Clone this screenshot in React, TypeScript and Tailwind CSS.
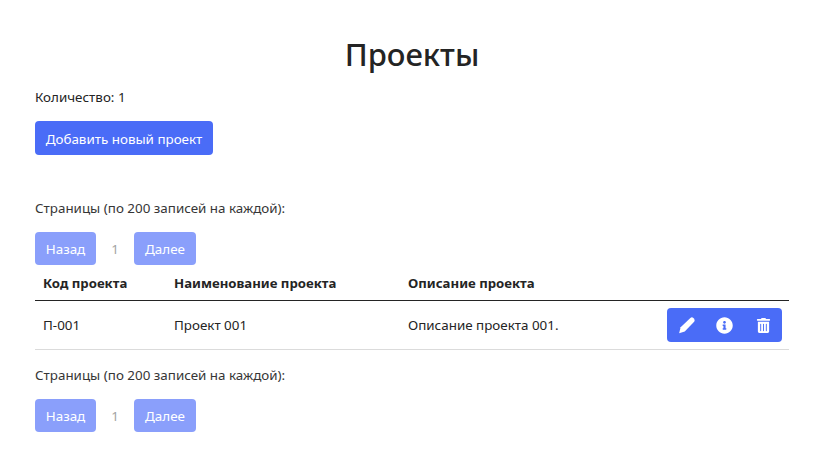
import { FaInfoCircle, FaTrashAlt } from 'react-icons/fa';

function Pager() {
  return (
    <div className="flex items-center">
      <button className="h-[33px] w-[61px] rounded bg-[#8a9ffb] pt-px text-white text-[13.4px] flex items-center justify-center">Назад</button>
      <span className="w-[38px] pt-px text-center text-[13.4px] text-[#a3a3a3]">1</span>
      <button className="h-[33px] w-[62px] rounded bg-[#8a9ffb] pt-px text-white text-[13.4px] flex items-center justify-center">Далее</button>
    </div>
  );
}

const PencilIcon = () => (
  <svg width="18" height="18" viewBox="0 0 24 24" fill="currentColor">
    <path d="M1.5 23 L3.5 15 L16.5 2.5 Q18.5 1 20.5 2.5 L21.5 3.5 Q23 5.5 21.5 7.5 L9 20.5 Z" />
  </svg>
);

export default function App() {
  return (
    <div className="w-[822px] h-[474px] bg-white pl-[35px] pr-[33px] text-[13.4px] text-[#363636] overflow-hidden" style={{ fontFamily: '"Noto Sans", sans-serif' }}>
      <h1 className="pt-[32px] h-[80px] text-center text-[31px] leading-[44px] font-medium text-[#242424]">Проекты</h1>
      <p className="mt-[8px] leading-[19px] text-[#242424]">Количество: 1</p>
      <button className="mt-[14px] h-[34px] w-[178px] rounded bg-[#4a6cf7] pt-[2px] text-white text-[13.4px]">Добавить новый проект</button>
      <p className="mt-[44px] leading-[19px]">Страницы (по 200 записей на каждой):</p>
      <div className="mt-[14px]"><Pager /></div>
      <div className="flex h-[36px] items-center border-b border-[#242424] pt-[2px] font-bold text-[13.2px] text-[#242424] px-2">
        <div className="w-[131px]">Код проекта</div>
        <div className="w-[234px]">Наименование проекта</div>
        <div>Описание проекта</div>
      </div>
      <div className="flex h-[49px] items-center border-b border-[#dbdbdb] pl-2 pr-[7px] text-[#242424]">
        <div className="w-[131px]">П-001</div>
        <div className="w-[234px]">Проект 001</div>
        <div className="flex-1">Описание проекта 001.</div>
        <div className="flex h-[34px] w-[115px] items-center rounded bg-[#4a6cf7] pl-[11px] text-white">
          <PencilIcon />
          <FaInfoCircle size={17} className="ml-[20px]" />
          <FaTrashAlt size={15} className="ml-[23px]" />
        </div>
      </div>
      <p className="mt-[16px] leading-[19px]">Страницы (по 200 записей на каждой):</p>
      <div className="mt-[14px]"><Pager /></div>
    </div>
  );
}
